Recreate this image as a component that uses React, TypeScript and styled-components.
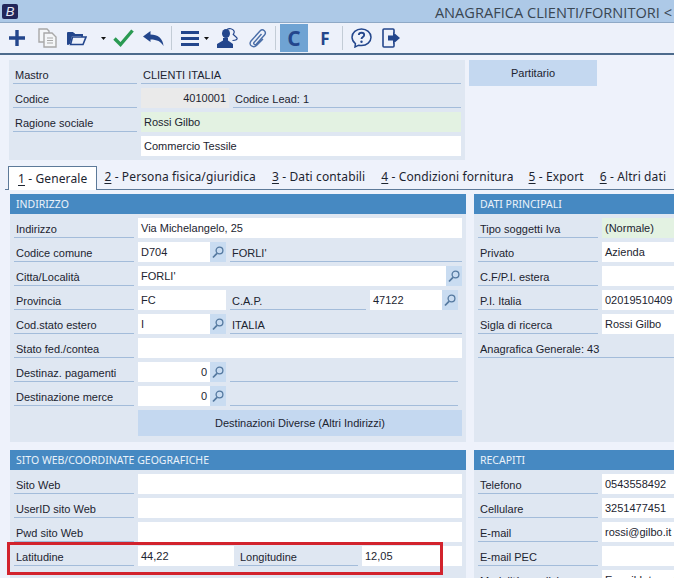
import React from "react";
import styled, { createGlobalStyle } from "styled-components";

const Global = createGlobalStyle`
  html, body { margin: 0; padding: 0; background: #eef2fb; }
  body { font-family: "Liberation Sans", "Noto Sans", sans-serif; font-size: 11px; color: #1c2430; }
  * { box-sizing: border-box; }
`;

const Page = styled.div`
  width: 674px; height: 578px; overflow: hidden; background: #eef2fb;
`;
const TitleBar = styled.header`
  height: 23px; background: #adc9e7; border-bottom: 1px solid #8fa9c6;
  display: flex; align-items: flex-start; justify-content: space-between;
  padding: 4px 2px 0 2px;
`;
const Logo = styled.span`
  width: 16px; height: 15px; border-radius: 2px; background: #22265a; color: #e8e8f4;
  font: italic 400 13px/15px "Liberation Sans", sans-serif; text-align: center;
`;
const Title = styled.h1`
  margin: -2px 0 0; font: 400 14.6px/20px "Open Sans", sans-serif; color: #3a4652; white-space: nowrap;
`;
const Toolbar = styled.nav`
  height: 32px; background: #edf1fa; border-bottom: 2px solid #4d6b8c;
  display: flex; align-items: center; padding-left: 6px;
`;
const Tool = styled.span<{ $w: number; $ml?: number }>`
  width: ${(p) => p.$w}px; margin-left: ${(p) => p.$ml ?? 0}px; height: 22px; flex: none;
  display: flex; align-items: center; justify-content: center;
`;
const ToolSep = styled.span<{ $ml: number }>`
  width: 1px; height: 24px; flex: none; margin-left: ${(p) => p.$ml}px; background: #c3ccd6;
`;
const LetterTool = styled.span<{ $w: number; $ml: number; $on?: boolean }>`
  width: ${(p) => p.$w}px; height: 28px; margin-left: ${(p) => p.$ml}px; flex: none;
  display: flex; align-items: center; justify-content: center;
  background: ${(p) => (p.$on ? "#6fa3d3" : "transparent")};
  color: #23468c; font: 700 ${(p) => (p.$on ? 21 : 17)}px "Open Sans", sans-serif;
`;
const HeaderArea = styled.div`
  display: flex; gap: 4px; padding: 5px 0 0 9px;
`;
const TopPanel = styled.section`
  width: 456px; height: 100px; background: #dfe7f2; padding: 4px;
  display: flex; flex-direction: column; gap: 4px;
`;
const SideButton = styled.button`
  width: 128px; height: 26px; border: 0; background: #c4d8f0; padding: 0;
  font: inherit; color: inherit;
`;
const Row = styled.div`
  position: relative; height: 20px; flex: none; display: flex; gap: 4px;
`;
const Label = styled.label<{ $w?: number }>`
  width: ${(p) => p.$w ?? 120}px; flex: none; height: 20px; padding: 3px 0 0 2px; line-height: 16px;
  border-bottom: 1px solid #a3bcda; white-space: nowrap; overflow: hidden;
`;
const BlankLabel = styled.span<{ $w?: number }>`
  width: ${(p) => p.$w ?? 120}px; flex: none;
`;
const Caption = styled(Label)<{ $grow?: boolean; $end?: number }>`
  width: auto; flex: ${(p) => (p.$grow ? "1" : "none")};
  ${(p) => (p.$grow ? "" : `width: ${p.$w}px;`)}
  margin-right: ${(p) => p.$end ?? 0}px;
`;
const Field = styled.div<{ $w?: number; $tone?: "white" | "green" | "gray"; $num?: boolean; $end?: number }>`
  ${(p) => (p.$w ? `width: ${p.$w}px; flex: none;` : "flex: 1;")}
  height: 20px; padding: 1px 3px 0; line-height: 18px; white-space: nowrap; overflow: hidden;
  margin-right: ${(p) => p.$end ?? 0}px;
  text-align: ${(p) => (p.$num ? "right" : "left")};
  background: ${(p) => (p.$tone === "green" ? "#e3f2e2" : p.$tone === "gray" ? "#eaeaea" : "#fff")};
`;
const Lookup = styled.span`
  width: 16px; height: 20px; flex: none; margin-left: -4px; background: #c9dcf1;
  display: flex; align-items: center; justify-content: center;
`;
const Tabs = styled.div`
  height: 24px; margin: 6px 0 4px 5px; border-bottom: 1px solid #5d7a99;
  display: flex; align-items: flex-end; white-space: nowrap;
  font: 400 12px/20px "Noto Sans", sans-serif; letter-spacing: 0.12px;
`;
const Tab = styled.span<{ $active?: boolean; $ml?: number }>`
  margin-left: ${(p) => p.$ml ?? 0}px; height: 24px; padding: 2px 9px 0; flex: none;
  ${(p) =>
    p.$active
      ? "background:#fff; border:1px solid #5d7a99; border-bottom:0; margin-bottom:-1px; height:24px;"
      : "padding-left:0; padding-right:0;"}
  u { text-underline-offset: 2px; }
`;
const Columns = styled.main`
  display: grid; grid-template-columns: 456px 210px; column-gap: 8px; row-gap: 8px;
  padding-left: 10px; grid-template-rows: 248px 128px;
`;
const Section = styled.section`
  background: #dfe7f2; display: flex; flex-direction: column; min-height: 0;
`;
const SectionHead = styled.h2`
  margin: 0; height: 20px; flex: none; background: #4689c2; color: #eaf2fa;
  font: 400 10.5px/21px "Noto Sans", sans-serif; padding-left: 6px;
`;
const SectionBody = styled.div`
  padding: 4px; display: flex; flex-direction: column; gap: 4px;
`;
const WideButton = styled.button`
  height: 26px; margin-left: 124px; flex: none; border: 0; background: #c4d8f0;
  font: inherit; color: inherit; padding: 0;
`;
const Highlight = styled.span`
  position: absolute; left: -7px; top: -4px; width: 436px; height: 33px;
  border: 3px solid #d2232d; pointer-events: none;
`;

const Plus = () => (
  <svg width="18" height="18" viewBox="0 0 18 18"><path d="M9 1v16M1 9h16" stroke="#23468c" strokeWidth="3.4" /></svg>
);
const Copy = () => (
  <svg width="19" height="20" viewBox="0 0 19 20" fill="#f4f6f8" stroke="#a8a8a8" strokeWidth="1.4">
    <path d="M1 1h8l2 2v11H1z" />
    <path d="M6 5h8l4 4v10H6z" />
    <path d="M9 10h6M9 12.5h6M9 15h6" strokeWidth="1.1" />
  </svg>
);
const Folder = () => (
  <svg width="20" height="15" viewBox="0 0 20 15">
    <path d="M0 2a1 1 0 0 1 1-1h5l2 2h8v2H5L3 13H0z" fill="#23468c" />
    <path d="M1 14V3h6l1 1h7v2H5.500L3.500 13.500H16l3-7.500H5.500" fill="none" stroke="#23468c" strokeWidth="1.6" />
  </svg>
);
const Caret = () => (
  <svg width="5" height="3" viewBox="0 0 5 3"><path d="M0 0h5L2.500 3z" fill="#111" /></svg>
);
const Check = () => (
  <svg width="21" height="18" viewBox="0 0 21 18"><path d="M1.500 9.500 7.500 15.500 19.500 1.500" fill="none" stroke="#2a9a52" strokeWidth="3.400" /></svg>
);
const Reply = () => (
  <svg width="21" height="15" viewBox="0 0 21 15">
    <path d="M0 5.500 7.500 0v3.400C14.500 3.400 20 7 20.500 15 18 10.500 14 8.400 7.500 8.400V11z" fill="#23468c" />
  </svg>
);
const Menu = () => (
  <svg width="18" height="15" viewBox="0 0 18 15"><path d="M0 1.500h18M0 7.500h18M0 13.500h18" stroke="#23468c" strokeWidth="2.800" /></svg>
);
const UserTalk = () => (
  <svg width="22" height="20" viewBox="0 0 22 20">
    <path d="M13 5.500a4 4.500 0 1 1-8 0 4 4.500 0 0 1 8 0z" fill="#23468c" />
    <path d="M6 10v2.500L0 16v4h16v-4l-5-3.500V10z" fill="#23468c" />
    <path d="M10 1.500C12 0 16 .5 17 3c.6 1.500 0 2.500-.8 3.400.8.800 3.300 2.600 3.800 3.600.5 1.500-1 2.500-4.500 2.500" fill="none" stroke="#23468c" strokeWidth="1.200" />
  </svg>
);
const Clip = () => (
  <svg width="19" height="20" viewBox="0 0 19 20">
    <path d="M13.500 6 6 14.500c-1 1.200.8 3 2.200 1.800L16.500 7c2.500-3-1.500-7-4.500-4L3 13c-3 3.800 2 7.500 5.500 4.500L15 11" fill="none" stroke="#4a6ea8" strokeWidth="1.400" />
  </svg>
);
const Help = () => (
  <svg width="21" height="20" viewBox="0 0 21 20">
    <path d="M10.500 1a9.500 8.300 0 0 1 0 16.600c-1 0-2-.1-2.800-.4L4 19l.4-3.400A8.200 8.200 0 0 1 1 9.300 9.500 8.300 0 0 1 10.500 1z" fill="none" stroke="#23468c" strokeWidth="1.500" />
    <path d="M7.800 7c.2-3 5.400-3 5.400 0 0 2-2.700 2-2.700 4" fill="none" stroke="#23468c" strokeWidth="1.800" />
    <circle cx="10.500" cy="13.700" r="1.200" fill="#23468c" />
  </svg>
);
const Exit = () => (
  <svg width="18" height="20" viewBox="0 0 18 20">
    <path d="M12 5V2a1 1 0 0 0-1-1H2a1 1 0 0 0-1 1v16a1 1 0 0 0 1 1h9a1 1 0 0 0 1-1v-3" fill="none" stroke="#23468c" strokeWidth="1.600" />
    <path d="M6 7.500h5V4l7 6-7 6v-3.500H6z" fill="#23468c" />
  </svg>
);
const Lens = () => (
  <svg width="12" height="13" viewBox="0 0 12 13">
    <circle cx="7.500" cy="4.500" r="3.400" fill="none" stroke="#54789f" strokeWidth="1.300" />
    <path d="M5 7.300 1 11.500" stroke="#54789f" strokeWidth="1.700" />
  </svg>
);
const Search = () => (
  <Lookup><Lens /></Lookup>
);

export default function App() {
  return (
    <Page>
      <Global />
      <TitleBar>
        <Logo>B</Logo>
        <Title>ANAGRAFICA CLIENTI/FORNITORI &lt;</Title>
      </TitleBar>
      <Toolbar>
        <Tool $w={22}><Plus /></Tool>
        <Tool $w={22} $ml={8}><Copy /></Tool>
        <Tool $w={22} $ml={8}><Folder /></Tool>
        <Tool $w={8} $ml={11}><Caret /></Tool>
        <Tool $w={22} $ml={5}><Check /></Tool>
        <Tool $w={22} $ml={8}><Reply /></Tool>
        <ToolSep $ml={7} />
        <Tool $w={20} $ml={8}><Menu /></Tool>
        <Tool $w={8} $ml={2}><Caret /></Tool>
        <Tool $w={22} $ml={7}><UserTalk /></Tool>
        <Tool $w={20} $ml={8}><Clip /></Tool>
        <ToolSep $ml={8} />
        <LetterTool $w={28} $ml={4} $on>C</LetterTool>
        <LetterTool $w={20} $ml={7}>F</LetterTool>
        <ToolSep $ml={7} />
        <Tool $w={22} $ml={7}><Help /></Tool>
        <Tool $w={20} $ml={9}><Exit /></Tool>
      </Toolbar>

      <HeaderArea>
        <TopPanel>
          <Row><Label $w={124}>Mastro</Label><Caption $grow>CLIENTI ITALIA</Caption></Row>
          <Row>
            <Label $w={124}>Codice</Label>
            <Field $w={88} $tone="gray" $num>4010001</Field>
            <Caption $grow>Codice Lead: 1</Caption>
          </Row>
          <Row><Label $w={124}>Ragione sociale</Label><Field $tone="green">Rossi Gilbo</Field></Row>
          <Row><BlankLabel $w={124} /><Field>Commercio Tessile</Field></Row>
        </TopPanel>
        <SideButton>Partitario</SideButton>
      </HeaderArea>

      <Tabs>
        <Tab $active $ml={3}><u>1</u> - Generale</Tab>
        <Tab $ml={7}><u>2</u> - Persona fisica/giuridica</Tab>
        <Tab $ml={16}><u>3</u> - Dati contabili</Tab>
        <Tab $ml={16}><u>4</u> - Condizioni fornitura</Tab>
        <Tab $ml={15}><u>5</u> - Export</Tab>
        <Tab $ml={16}><u>6</u> - Altri dati</Tab>
      </Tabs>

      <Columns>
        <Section>
          <SectionHead>INDIRIZZO</SectionHead>
          <SectionBody>
            <Row><Label>Indirizzo</Label><Field>Via Michelangelo, 25</Field></Row>
            <Row><Label>Codice comune</Label><Field $w={72}>D704</Field><Search /><Caption $grow>FORLI'</Caption></Row>
            <Row><Label>Citta/Località</Label><Field>FORLI'</Field><Search /></Row>
            <Row>
              <Label>Provincia</Label><Field $w={88}>FC</Field>
              <Caption $w={136}>C.A.P.</Caption><Field $w={72}>47122</Field><Search /><BlankLabel $w={0} />
            </Row>
            <Row><Label>Cod.stato estero</Label><Field $w={72}>I</Field><Search /><Caption $grow>ITALIA</Caption></Row>
            <Row><Label>Stato fed./contea</Label><Field /></Row>
            <Row><Label>Destinaz. pagamenti</Label><Field $w={72} $num>0</Field><Search /><Caption $grow $end={4} /></Row>
            <Row><Label>Destinazione merce</Label><Field $w={72} $num>0</Field><Search /><Caption $grow $end={4} /></Row>
            <WideButton>Destinazioni Diverse (Altri Indirizzi)</WideButton>
          </SectionBody>
        </Section>
        <Section>
          <SectionHead>DATI PRINCIPALI</SectionHead>
          <SectionBody>
            <Row><Label>Tipo soggetti Iva</Label><Field $tone="green">(Normale)</Field></Row>
            <Row><Label>Privato</Label><Field>Azienda</Field></Row>
            <Row><Label>C.F/P.I. estera</Label><Field /></Row>
            <Row><Label>P.I. Italia</Label><Field>02019510409</Field></Row>
            <Row><Label>Sigla di ricerca</Label><Field>Rossi Gilbo</Field></Row>
            <Row><Caption $grow>Anagrafica Generale: 43</Caption></Row>
          </SectionBody>
        </Section>
        <Section>
          <SectionHead>SITO WEB/COORDINATE GEOGRAFICHE</SectionHead>
          <SectionBody>
            <Row><Label>Sito Web</Label><Field /></Row>
            <Row><Label>UserID sito Web</Label><Field /></Row>
            <Row><Label>Pwd sito Web</Label><Field /></Row>
            <Row>
              <Label>Latitudine</Label><Field $w={96}>44,22</Field>
              <Caption $w={120}>Longitudine</Caption><Field>12,05</Field>
              <Highlight />
            </Row>
          </SectionBody>
        </Section>
        <Section>
          <SectionHead>RECAPITI</SectionHead>
          <SectionBody>
            <Row><Label>Telefono</Label><Field>0543558492</Field></Row>
            <Row><Label>Cellulare</Label><Field>3251477451</Field></Row>
            <Row><Label>E-mail</Label><Field>rossi@gilbo.it</Field></Row>
            <Row><Label>E-mail PEC</Label><Field /></Row>
            <Row><Label>Modalità spedizione</Label><Field>E-mail Internet</Field></Row>
          </SectionBody>
        </Section>
      </Columns>
    </Page>
  );
}
